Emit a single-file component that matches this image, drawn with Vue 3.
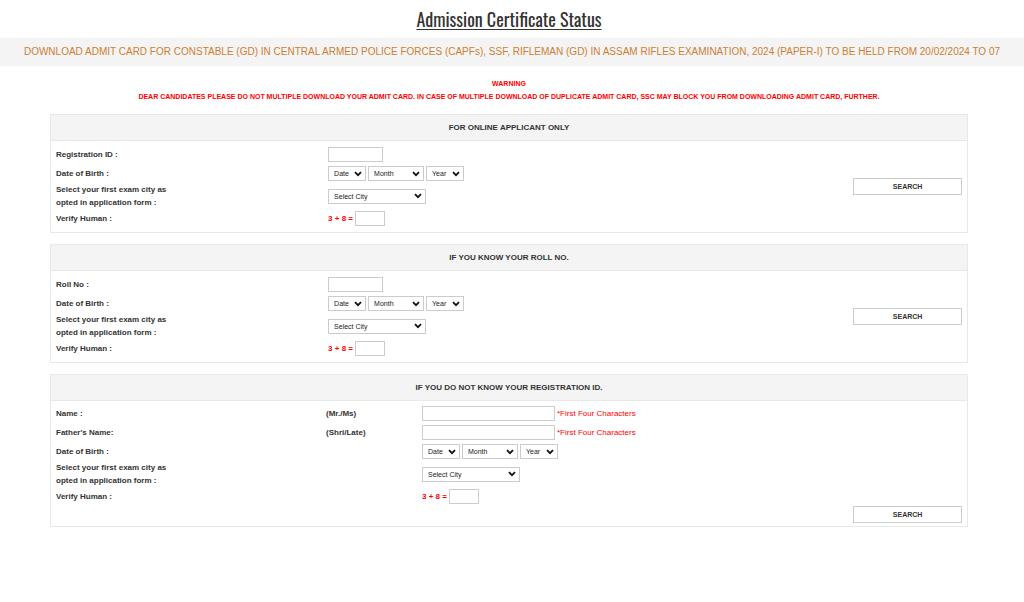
<script setup>
const panels = [
  { id: 'online', title: 'FOR ONLINE APPLICANT ONLY', fields: [{ label: 'Registration ID :' }] },
  { id: 'roll', title: 'IF YOU KNOW YOUR ROLL NO.', fields: [{ label: 'Roll No :' }] },
  {
    id: 'name',
    title: 'IF YOU DO NOT KNOW YOUR REGISTRATION ID.',
    wide: true,
    fields: [
      { label: 'Name :', prefix: '(Mr./Ms)', hint: '*First Four Characters' },
      { label: "Father's Name:", prefix: '(Shri/Late)', hint: '*First Four Characters' },
    ],
  },
]
</script>

<template>
  <main class="page">
    <h1 class="title">Admission Certificate Status</h1>
    <div class="ticker">DOWNLOAD ADMIT CARD FOR CONSTABLE (GD) IN CENTRAL ARMED POLICE FORCES (CAPFs), SSF, RIFLEMAN (GD) IN ASSAM RIFLES EXAMINATION, 2024 (PAPER-I) TO BE HELD FROM 20/02/2024 TO 07</div>

    <div class="content">
      <div class="warning">
        <p>WARNING</p>
        <p>DEAR CANDIDATES PLEASE DO NOT MULTIPLE DOWNLOAD YOUR ADMIT CARD. IN CASE OF MULTIPLE DOWNLOAD OF DUPLICATE ADMIT CARD, SSC MAY BLOCK YOU FROM DOWNLOADING ADMIT CARD, FURTHER.</p>
      </div>

      <section v-for="p in panels" :key="p.id" class="panel" :class="{ wide: p.wide }">
        <h2 class="heading">{{ p.title }}</h2>
        <form class="body" @submit.prevent>
          <div class="rows">
            <div v-for="(f, i) in p.fields" :key="f.label" class="row">
              <label class="label" :for="`${p.id}-text-${i}`">{{ f.label }}</label>
              <span v-if="p.wide" class="prefix">{{ f.prefix }}</span>
              <div class="controls">
                <input :id="`${p.id}-text-${i}`" class="box text" type="text" />
                <span v-if="f.hint" class="hint">{{ f.hint }}</span>
              </div>
            </div>
            <div class="row">
              <label class="label" :for="`${p.id}-date`">Date of Birth :</label>
              <span v-if="p.wide"></span>
              <div class="controls">
                <select :id="`${p.id}-date`" class="box short"><option>Date</option></select>
                <select class="box month" aria-label="Month"><option>Month</option></select>
                <select class="box short" aria-label="Year"><option>Year</option></select>
              </div>
            </div>
            <div class="row tall">
              <label class="label" :for="`${p.id}-city`">Select your first exam city as<br />opted in application form :</label>
              <span v-if="p.wide"></span>
              <div class="controls">
                <select :id="`${p.id}-city`" class="box city"><option>Select City</option></select>
              </div>
            </div>
            <div class="row">
              <label class="label" :for="`${p.id}-sum`">Verify Human :</label>
              <span v-if="p.wide"></span>
              <div class="controls">
                <span class="sum">3 + 8 =</span>
                <input :id="`${p.id}-sum`" class="box answer" type="text" />
              </div>
            </div>
          </div>
          <button class="search" type="submit">SEARCH</button>
        </form>
      </section>
    </div>
  </main>
</template>

<style>
body {
  background: #fff;
}
</style>

<style scoped>
.page {
  font-family: "Liberation Sans", Arial, sans-serif;
  font-size: 8px;
  color: #333;
  overflow: hidden;
}
.page * {
  box-sizing: border-box;
}
.title {
  margin: 0;
  padding: 6px 6px 6px 0;
  text-align: center;
  font-family: Oswald, "Liberation Sans Narrow", "Open Sans Condensed", "Roboto Condensed", Roboto, sans-serif;
  font-weight: 400;
  font-size: 18px;
  line-height: 26px;
  text-decoration: underline;
  text-underline-offset: 2px;
}
.ticker {
  line-height: 28px;
  background: #f4f4f4;
  color: #cd7f32;
  font-size: 10px;
  text-align: center;
  white-space: nowrap;
}
.content {
  margin: 11px 56px 0 50px;
}
.warning {
  color: #f00;
  font-size: 7px;
  font-weight: 700;
  text-align: center;
  line-height: 13px;
  margin-bottom: 11px;
}
.warning p {
  margin: 0;
}
.panel {
  border: 1px solid #e8e8e8;
  margin-bottom: 11px;
}
.heading {
  margin: 0;
  text-align: center;
  font-size: 8px;
  line-height: 25px;
  background: #f4f4f4;
  border-bottom: 1px solid #e8e8e8;
}
.body {
  display: flex;
  align-items: center;
  padding: 4px 5px;
}
.rows {
  flex: 1;
}
.row {
  display: grid;
  grid-template-columns: 272fr 525fr;
  align-items: center;
  height: 19px;
}
.tall {
  height: 26px;
}
.wide .body {
  flex-direction: column;
  align-items: flex-end;
  padding: 3px 5px;
}
.wide .rows {
  width: 100%;
}
.wide .row {
  grid-template-columns: 270fr 96fr 540fr;
}
.label,
.prefix {
  font-weight: 700;
  line-height: 13px;
}
.controls {
  display: flex;
  align-items: center;
  gap: 2px;
}
.box {
  height: 15px;
  border: 1px solid #ccc;
  border-radius: 0;
  background: #fff;
  color: #222;
  font-family: inherit;
  font-size: 7px;
  padding: 0 1px;
  margin: 0;
}
select.box {
  appearance: none;
  line-height: 13px;
  padding: 0 12px 0 5px;
  background: #fff url("data:image/svg+xml,%3Csvg xmlns='http://www.w3.org/2000/svg' width='8' height='6' viewBox='0 0 8 6'%3E%3Cpath d='M1 1.2 4 4.2 7 1.2' fill='none' stroke='%23111' stroke-width='1.8'/%3E%3C/svg%3E") no-repeat right 3px center;
}
.text {
  width: 55px;
}
.wide .text {
  width: 133px;
}
.short {
  width: 38px;
}
.month {
  width: 56px;
}
.city {
  width: 98px;
}
.answer {
  width: 30px;
}
.hint {
  color: #f00;
}
.sum {
  color: #f00;
  font-weight: 700;
}
.search {
  width: 12%;
  height: 17px;
  padding: 0;
  border: 1px solid #ccc;
  background: #fff;
  color: #333;
  font-family: inherit;
  font-size: 7px;
  font-weight: 700;
}
</style>
